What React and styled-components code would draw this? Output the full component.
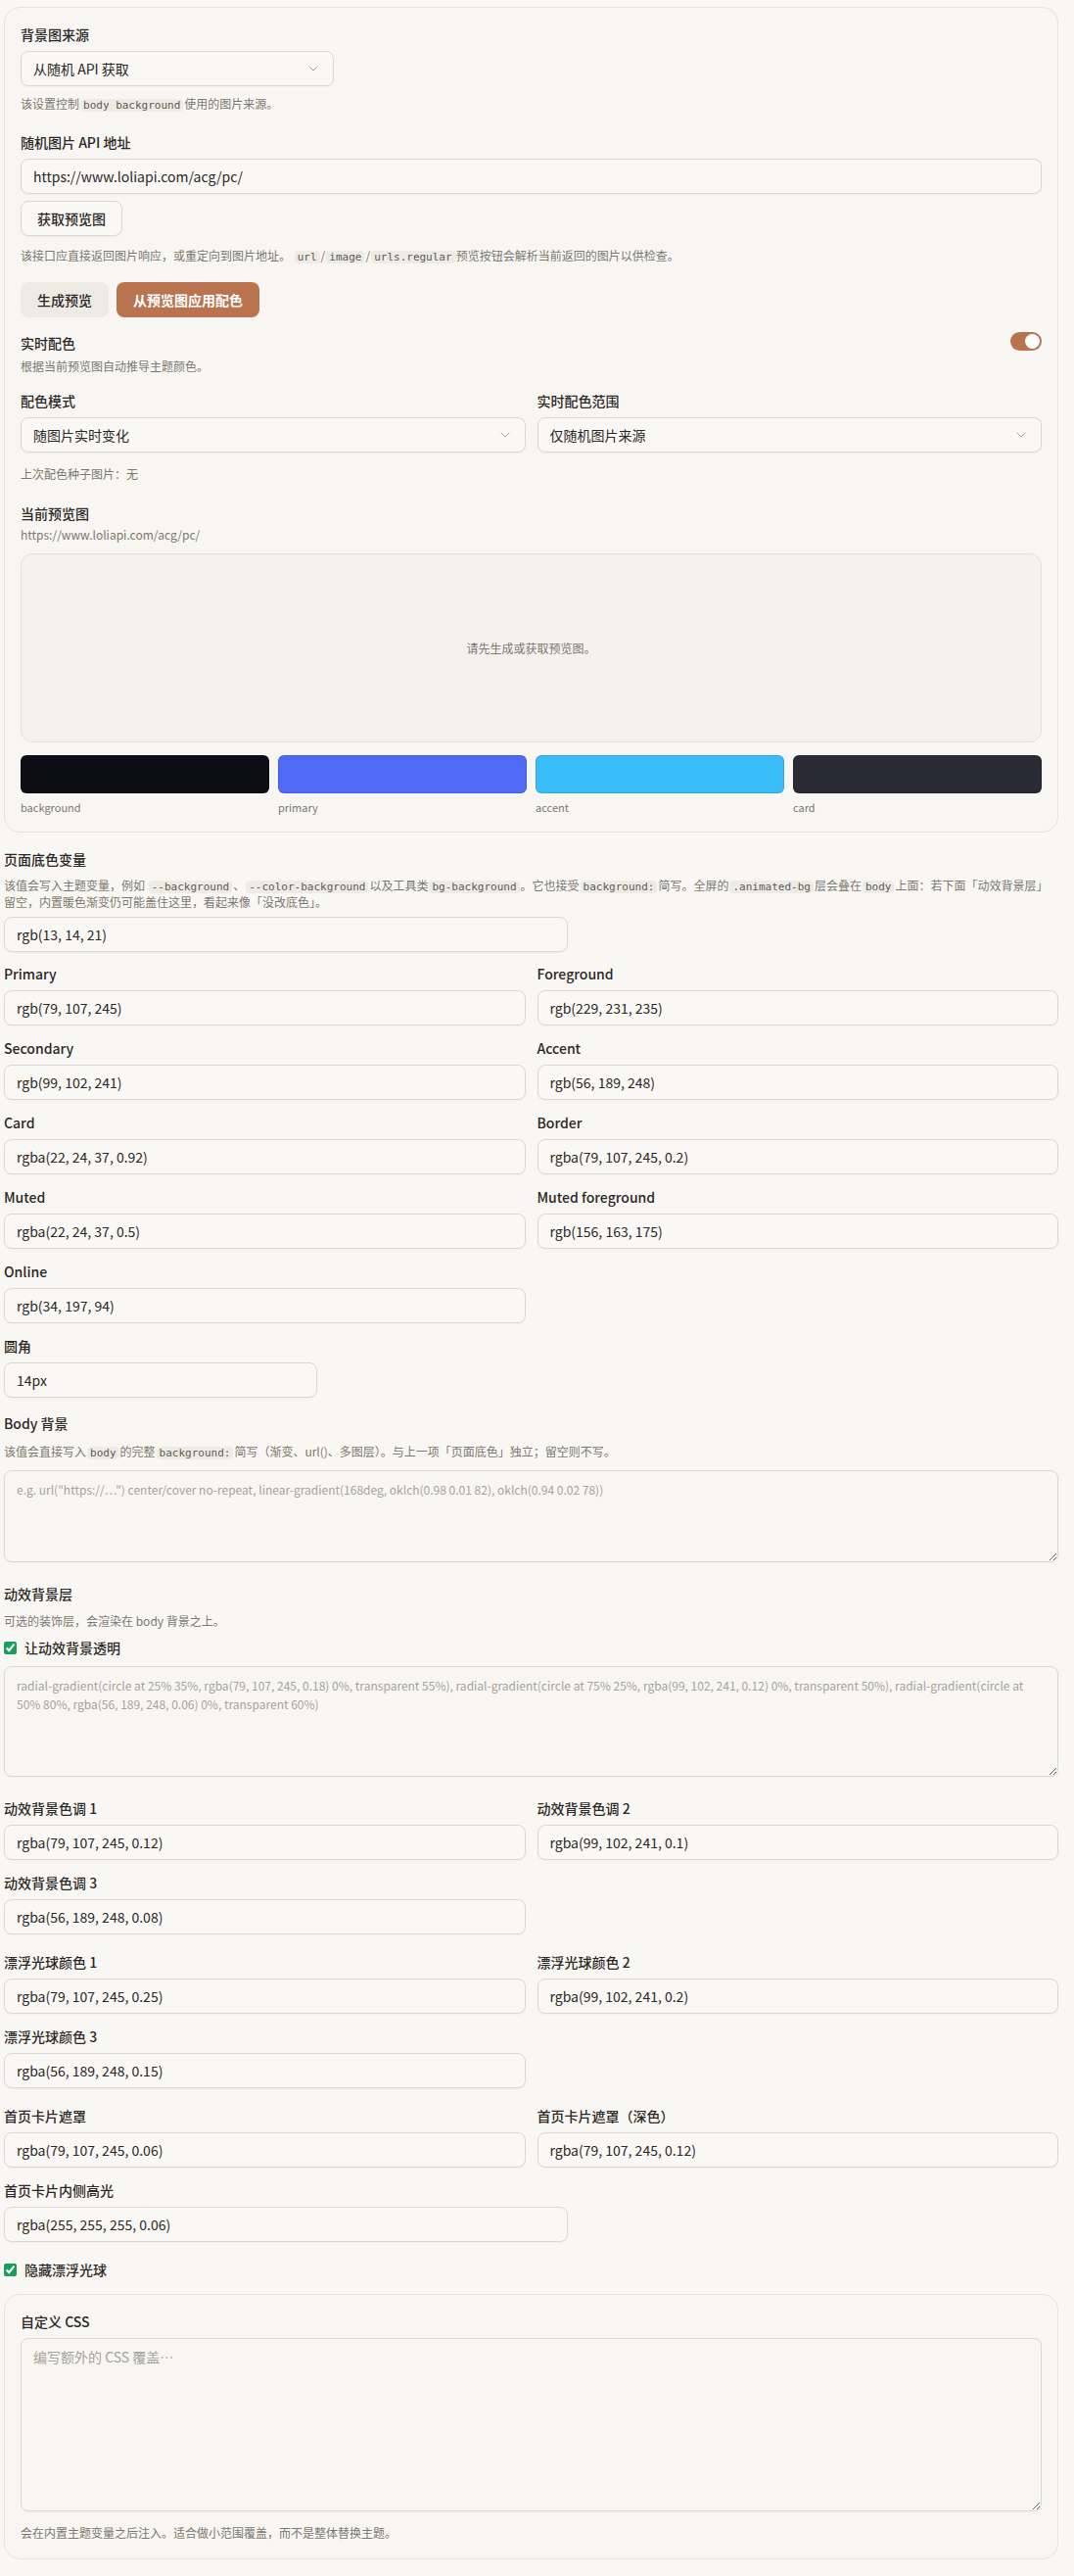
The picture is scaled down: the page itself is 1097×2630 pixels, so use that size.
import styled, { createGlobalStyle } from "styled-components";
import { ChevronDown } from "lucide-react";

const GlobalStyle = createGlobalStyle`
  * { box-sizing: border-box; }
  body {
    margin: 0;
    background: #f9f7f3;
    color: #2b2724;
    font-family: "Noto Sans CJK SC", "Noto Sans", sans-serif;
    font-size: 14px;
  }
`;

const Page = styled.div`
  width: 1077px;
  margin-left: 4px;
  padding: 7px 0 21px;
  display: flex;
  flex-direction: column;
`;

const Card = styled.section`
  background: #f8f6f2;
  border: 1px solid #e7e3dc;
  border-radius: 16px;
  padding: 17px 16px 17px;
  display: flex;
  flex-direction: column;
  gap: 16px;
  margin-top: ${(p) => p.$top || 0}px;
`;

const Field = styled.div`
  display: flex;
  flex-direction: column;
  gap: 7px;
  width: ${(p) => (p.$w ? `${p.$w}px` : "auto")};
  margin-top: ${(p) => p.$top || 0}px;
`;

const Label = styled.div`
  font-size: 14px;
  line-height: 20px;
  font-weight: 500;
  color: #2b2724;
`;

const Help = styled.p`
  margin: ${(p) => p.$top || 0}px 0 0;
  font-size: 12px;
  line-height: ${(p) => p.$lh || 18}px;
  color: #7d776f;
`;

const Code = styled.code`
  font-family: "DejaVu Sans Mono", "Liberation Mono", monospace;
  font-size: 11px;
  line-height: 1;
  background: #eeebe5;
  border-radius: 4px;
  padding: 0 3px;
  margin: 0 1px;
  color: #5f5a54;
`;

const SelectBox = styled.div`
  height: 36px;
  width: ${(p) => (p.$w ? `${p.$w}px` : "100%")};
  border: 1px solid #ddd8d1;
  border-radius: 8px;
  background: #faf8f5;
  box-shadow: 0 1px 2px rgba(0, 0, 0, 0.04);
  display: flex;
  align-items: center;
  justify-content: space-between;
  padding: 0 12px;
  font-size: 14px;
  color: #2b2724;
  svg {
    color: #aaa39b;
  }
`;

const Input = styled.input`
  height: 36px;
  width: ${(p) => (p.$w ? `${p.$w}px` : "100%")};
  border: 1px solid #ddd8d1;
  border-radius: 8px;
  background: #faf8f5;
  box-shadow: 0 1px 2px rgba(0, 0, 0, 0.04);
  padding: 0 12px;
  font: inherit;
  font-size: 14px;
  color: #2b2724;
  outline: none;
`;

const TextArea = styled.textarea`
  display: block;
  width: 100%;
  height: ${(p) => p.$h}px;
  border: 1px solid #ddd8d1;
  border-radius: 8px;
  background: #f8f6f1;
  box-shadow: 0 1px 2px rgba(0, 0, 0, 0.04);
  padding: 9px 12px;
  font: inherit;
  font-size: ${(p) => p.$fs || 12}px;
  line-height: 19px;
  color: #2b2724;
  resize: vertical;
  outline: none;
  &::placeholder {
    color: #a8a29a;
  }
`;

const ButtonRow = styled.div`
  display: flex;
  gap: 8px;
  margin-top: 2px;
`;

const Button = styled.button`
  height: 36px;
  padding: 0 16px;
  border-radius: 8px;
  font: inherit;
  font-size: 14px;
  font-weight: ${(p) => (p.$variant === "primary" ? 700 : 500)};
  cursor: pointer;
  align-self: flex-start;
  border: 1px solid
    ${(p) => (p.$variant === "outline" ? "#ddd8d1" : "transparent")};
  background: ${(p) =>
    p.$variant === "primary"
      ? "#b9744f"
      : p.$variant === "outline"
      ? "#faf8f5"
      : "#eeeae4"};
  color: ${(p) => (p.$variant === "primary" ? "#fff" : "#2b2724")};
  box-shadow: ${(p) =>
    p.$variant === "outline" ? "0 1px 2px rgba(0,0,0,0.04)" : "none"};
`;

const ToggleRow = styled.div`
  display: flex;
  justify-content: space-between;
  align-items: flex-start;
`;

const ToggleText = styled.div`
  display: flex;
  flex-direction: column;
  gap: 5px;
`;

const Switch = styled.span`
  position: relative;
  flex: none;
  width: 32px;
  height: 19px;
  border-radius: 999px;
  background: #b9744f;
  margin-top: -1px;
  &::after {
    content: "";
    position: absolute;
    top: 2px;
    right: 2px;
    width: 15px;
    height: 15px;
    border-radius: 50%;
    background: #fff;
  }
`;

const Grid = styled.div`
  display: grid;
  grid-template-columns: 1fr 1fr;
  column-gap: 12px;
  row-gap: 13px;
  margin-top: ${(p) => p.$top || 0}px;
`;

const PreviewBlock = styled.div`
  display: flex;
  flex-direction: column;
  margin-top: 5px;
`;

const PreviewBox = styled.div`
  height: 193px;
  margin-top: 10px;
  border: 1px solid #e5e1da;
  border-radius: 12px;
  background: #f5f2ed;
  display: flex;
  align-items: center;
  justify-content: center;
  font-size: 12px;
  color: #7d776f;
`;

const Swatches = styled.div`
  display: grid;
  grid-template-columns: repeat(4, 1fr);
  gap: 9px;
  margin-top: 13px;
`;

const Swatch = styled.div`
  display: flex;
  flex-direction: column;
  gap: 6px;
`;

const Chip = styled.div`
  height: 39px;
  border-radius: 6px;
  border: 1px solid rgba(0, 0, 0, 0.12);
  background: ${(p) => p.$color};
`;

const ChipName = styled.span`
  font-size: 11px;
  line-height: 16px;
  color: #7d776f;
`;

const Section = styled.div`
  display: flex;
  flex-direction: column;
  margin-top: ${(p) => p.$top || 0}px;
`;

const CheckRow = styled.label`
  display: flex;
  align-items: center;
  gap: 8px;
  height: 20px;
  margin-top: ${(p) => p.$top || 0}px;
  font-size: 14px;
  font-weight: 500;
  input {
    margin: 0;
    width: 13px;
    height: 13px;
    accent-color: #18a058;
  }
`;

const SelectField = ({ value, w }) => (
  <SelectBox $w={w}>
    <span>{value}</span>
    <ChevronDown size={16} strokeWidth={1.5} />
  </SelectBox>
);

const ColorField = ({ label, value, w, top }) => (
  <Field $w={w} $top={top}>
    <Label>{label}</Label>
    <Input defaultValue={value} $w={w} />
  </Field>
);

const themeColors = [
  ["Primary", "rgb(79, 107, 245)"],
  ["Foreground", "rgb(229, 231, 235)"],
  ["Secondary", "rgb(99, 102, 241)"],
  ["Accent", "rgb(56, 189, 248)"],
  ["Card", "rgba(22, 24, 37, 0.92)"],
  ["Border", "rgba(79, 107, 245, 0.2)"],
  ["Muted", "rgba(22, 24, 37, 0.5)"],
  ["Muted foreground", "rgb(156, 163, 175)"],
  ["Online", "rgb(34, 197, 94)"],
];

const swatches = [
  ["background", "#0d0e15"],
  ["primary", "#4f6bf5"],
  ["accent", "#38bdf8"],
  ["card", "#292a34"],
];

const animatedDefault =
  "radial-gradient(circle at 25% 35%, rgba(79, 107, 245, 0.18) 0%, transparent 55%), radial-gradient(circle at 75% 25%, rgba(99, 102, 241, 0.12) 0%, transparent 50%), radial-gradient(circle at 50% 80%, rgba(56, 189, 248, 0.06) 0%, transparent 60%)";

export default function App() {
  return (
    <>
      <GlobalStyle />
      <Page>
        <Card>
          <Field>
            <Label>背景图来源</Label>
            <SelectField value="从随机 API 获取" w={320} />
            <Help $top={2}>
              该设置控制<Code>body background</Code>使用的图片来源。
            </Help>
          </Field>

          <Field $top={4}>
            <Label>随机图片 API 地址</Label>
            <Input defaultValue="https://www.loliapi.com/acg/pc/" />
            <Button $variant="outline">获取预览图</Button>
            <Help $top={4}>
              该接口应直接返回图片响应，或重定向到图片地址。 <Code>url</Code>/
              <Code>image</Code>/<Code>urls.regular</Code>
              预览按钮会解析当前返回的图片以供检查。
            </Help>
          </Field>

          <ButtonRow>
            <Button>生成预览</Button>
            <Button $variant="primary">从预览图应用配色</Button>
          </ButtonRow>

          <ToggleRow>
            <ToggleText>
              <Label>实时配色</Label>
              <Help>根据当前预览图自动推导主题颜色。</Help>
            </ToggleText>
            <Switch />
          </ToggleRow>

          <Grid>
            <Field>
              <Label>配色模式</Label>
              <SelectField value="随图片实时变化" />
            </Field>
            <Field>
              <Label>实时配色范围</Label>
              <SelectField value="仅随机图片来源" />
            </Field>
          </Grid>

          <Help $top={-3}>上次配色种子图片：无</Help>

          <PreviewBlock>
            <Label>当前预览图</Label>
            <Help $top={3}>https://www.loliapi.com/acg/pc/</Help>
            <PreviewBox>请先生成或获取预览图。</PreviewBox>
            <Swatches>
              {swatches.map(([name, color]) => (
                <Swatch key={name}>
                  <Chip $color={color} />
                  <ChipName>{name}</ChipName>
                </Swatch>
              ))}
            </Swatches>
          </PreviewBlock>
        </Card>

        <Section $top={17}>
          <Label>页面底色变量</Label>
          <Help $top={8} $lh={17}>
            该值会写入主题变量，例如 <Code>--background</Code>、
            <Code>--color-background</Code>以及工具类
            <Code>bg-background</Code>。它也接受<Code>background:</Code>
            简写。全屏的<Code>.animated-bg</Code>层会叠在<Code>body</Code>
            上面：若下面「动效背景层」留空，内置暖色渐变仍可能盖住这里，看起来像「没改底色」。
          </Help>
          <Input defaultValue="rgb(13, 14, 21)" $w={576} style={{ marginTop: 7 }} />
        </Section>

        <Grid $top={12}>
          {themeColors.map(([label, value]) => (
            <ColorField key={label} label={label} value={value} />
          ))}
        </Grid>

        <ColorField label="圆角" value="14px" w={320} top={13} />

        <Section $top={16}>
          <Label>Body 背景</Label>
          <Help $top={10}>
            该值会直接写入<Code>body</Code>的完整<Code>background:</Code>
            简写（渐变、url()、多图层）。与上一项「页面底色」独立；留空则不写。
          </Help>
          <div style={{ marginTop: 10 }}>
            <TextArea
              $h={94}
              placeholder={
                'e.g. url("https://…") center/cover no-repeat, linear-gradient(168deg, oklch(0.98 0.01 82), oklch(0.94 0.02 78))'
              }
            />
          </div>
        </Section>

        <Section $top={22}>
          <Label>动效背景层</Label>
          <Help $top={9}>可选的装饰层，会渲染在 body 背景之上。</Help>
          <CheckRow $top={8}>
            <input type="checkbox" defaultChecked />
            让动效背景透明
          </CheckRow>
          <div style={{ marginTop: 9 }}>
            <TextArea $h={113} placeholder={animatedDefault} />
          </div>
        </Section>

        <Grid $top={22}>
          <ColorField label="动效背景色调 1" value="rgba(79, 107, 245, 0.12)" />
          <ColorField label="动效背景色调 2" value="rgba(99, 102, 241, 0.1)" />
          <ColorField label="动效背景色调 3" value="rgba(56, 189, 248, 0.08)" />
        </Grid>

        <Grid $top={18}>
          <ColorField label="漂浮光球颜色 1" value="rgba(79, 107, 245, 0.25)" />
          <ColorField label="漂浮光球颜色 2" value="rgba(99, 102, 241, 0.2)" />
          <ColorField label="漂浮光球颜色 3" value="rgba(56, 189, 248, 0.15)" />
        </Grid>

        <Grid $top={18}>
          <ColorField label="首页卡片遮罩" value="rgba(79, 107, 245, 0.06)" />
          <ColorField label="首页卡片遮罩（深色）" value="rgba(79, 107, 245, 0.12)" />
        </Grid>

        <ColorField
          label="首页卡片内侧高光"
          value="rgba(255, 255, 255, 0.06)"
          w={576}
          top={13}
        />

        <CheckRow $top={18}>
          <input type="checkbox" defaultChecked />
          隐藏漂浮光球
        </CheckRow>

        <Card $top={15}>
          <Field>
            <Label>自定义 CSS</Label>
            <TextArea $h={177} $fs={14} placeholder="编写额外的 CSS 覆盖…" />
            <Help $top={6}>会在内置主题变量之后注入。适合做小范围覆盖，而不是整体替换主题。</Help>
          </Field>
        </Card>
      </Page>
    </>
  );
}
